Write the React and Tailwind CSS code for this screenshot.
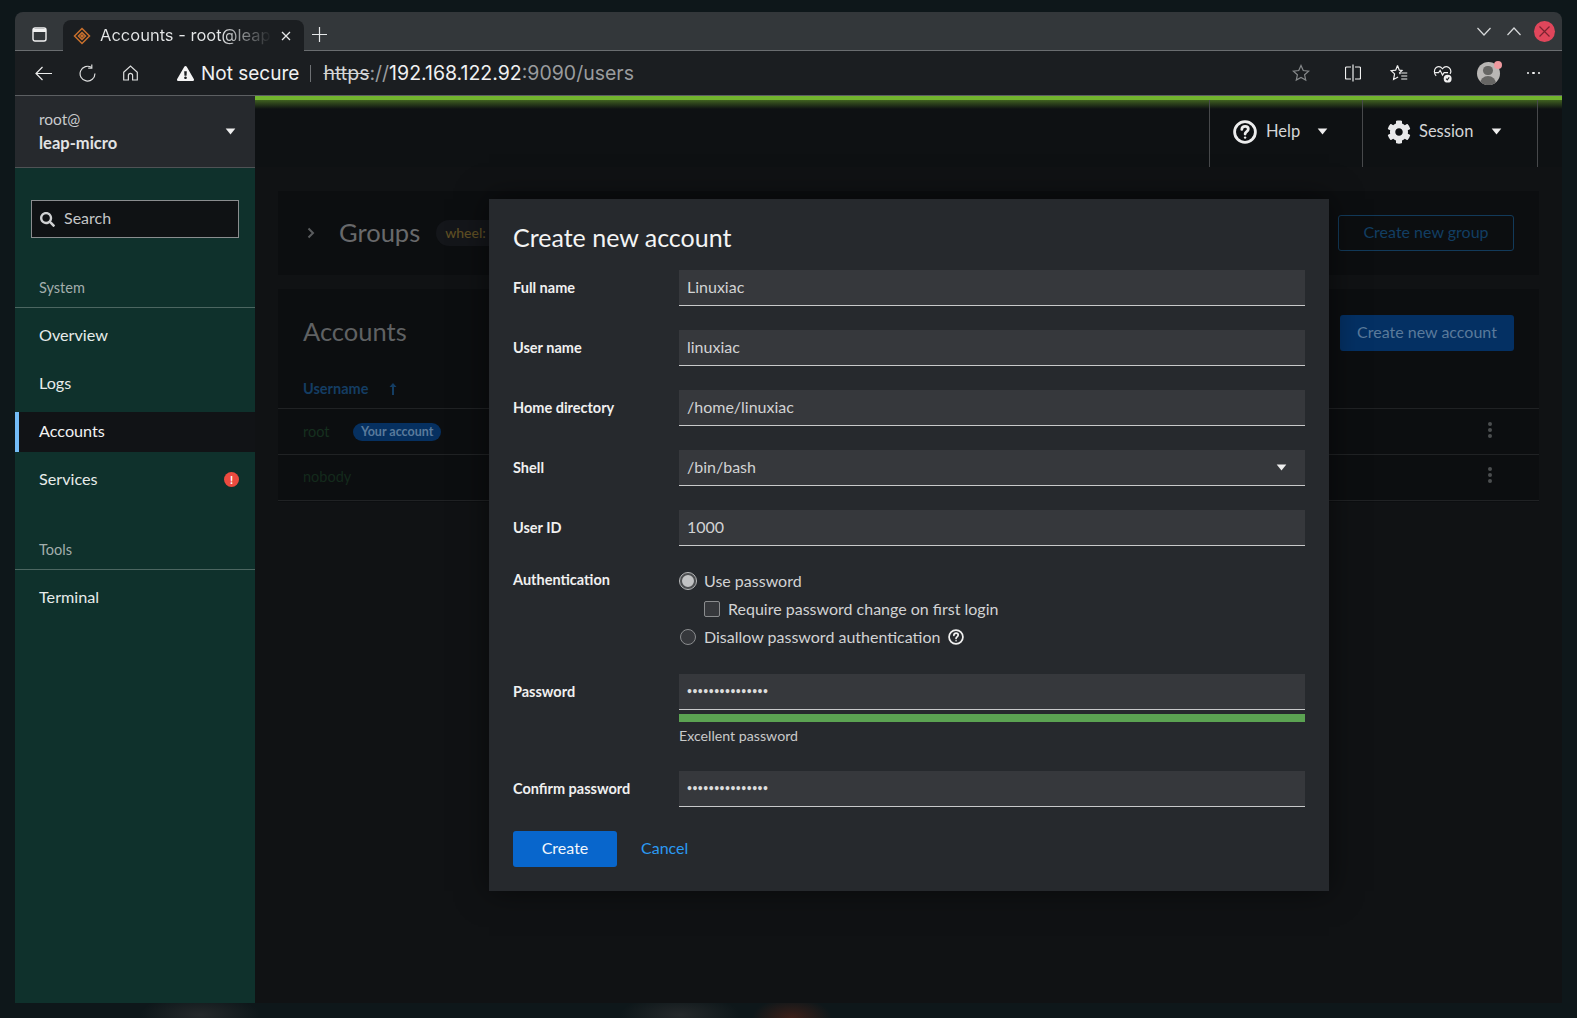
import React from "react";
import { FaCog, FaSearch, FaExclamationTriangle } from "react-icons/fa";

const Caret = ({ className = "" }) => (
  <svg viewBox="0 0 12 8" className={"w-[11px] h-[7px] " + className} fill="currentColor"><path d="M0.5 0.5h11L6 7.5z" /></svg>
);

const Q = ({ size, sw = 2.4 }) => (
  <svg width={size} height={size} viewBox="0 0 24 24" fill="none" stroke="currentColor" strokeWidth={sw}>
    <circle cx="12" cy="12" r="10.4" />
    <path d="M8.8 9.4c0-1.9 1.4-3.1 3.3-3.1s3.2 1.1 3.2 2.8c0 2.6-3.2 2.6-3.2 5" strokeLinecap="round" />
    <circle cx="12.1" cy="17.6" r="1.2" fill="currentColor" stroke="none" />
  </svg>
);

function TabStrip() {
  return (
    <div className="h-[39px] flex items-end bg-[#33373a] border-b border-[#6a6d70] text-[#e6e8e9] shrink-0 pl-[17px] font-[Inter,sans-serif]">
      <svg className="mb-[8px] mr-[16px]" width="15" height="15" viewBox="0 0 15 15" fill="none" stroke="#f2f2f2" strokeWidth="1.4">
        <rect x="1" y="1" width="13" height="13" rx="2" />
        <path d="M1 3.6h13" strokeWidth="3" />
      </svg>
      <div className="w-[241px] h-[31px] -mb-px bg-[#1b1e21] rounded-t-lg flex items-center pl-[10px] pr-[13px]">
        <svg width="18" height="18" viewBox="0 0 18 18" fill="none" stroke="#c9702d" strokeWidth="1.5" className="shrink-0">
          <path d="M9 1.5 16.5 9 9 16.5 1.5 9z" />
          <path d="M9 5.5 12.5 9 9 12.5 5.5 9z" />
          <circle cx="9" cy="9" r="1" fill="#c9702d" />
        </svg>
        <div className="ml-[9px] mb-[2px] w-[172px] h-[20px] overflow-hidden whitespace-nowrap text-[16.5px] leading-[20px] bg-[linear-gradient(90deg,#e6e8e9_70%,#1b1e21_100%)] bg-clip-text text-transparent">Accounts - root@leap</div>
        <svg className="ml-auto" width="10" height="10" viewBox="0 0 10 10" stroke="#e6e8e9" strokeWidth="1.3"><path d="M1 1l8 8M9 1l-8 8" /></svg>
      </div>
      <svg className="ml-[8px] mb-[8px]" width="15" height="15" viewBox="0 0 15 15" stroke="#e6e8e9" strokeWidth="1.2"><path d="M7.5 0v15M0 7.5h15" /></svg>
      <div className="ml-auto flex items-center h-full pr-[7px]">
        <svg width="14" height="9" viewBox="0 0 14 9" fill="none" stroke="#d6d8d9" strokeWidth="1.2"><path d="M.5 1 7 8l6.5-7" /></svg>
        <svg className="ml-[16px]" width="14" height="9" viewBox="0 0 14 9" fill="none" stroke="#d6d8d9" strokeWidth="1.2"><path d="M.5 8 7 1l6.5 7" /></svg>
        <div className="ml-[13px] w-[21px] h-[21px] rounded-full bg-[#e0465b] flex items-center justify-center">
          <svg width="11" height="11" viewBox="0 0 11 11" stroke="#7a2330" strokeWidth="1.2"><path d="M.5.5l10 10M10.5.5l-10 10" /></svg>
        </div>
      </div>
    </div>
  );
}

function Toolbar() {
  return (
    <div className="h-[45px] flex items-center bg-[#1b1e21] border-b border-[#5c5f62] shrink-0 text-[#f0f1f2] font-[Inter,sans-serif]">
      <svg className="ml-[20px]" width="17" height="15" viewBox="0 0 17 15" fill="none" stroke="#eceded" strokeWidth="1.2"><path d="M17 7.5H1M7.5 1 1 7.5 7.5 14" /></svg>
      <svg className="ml-[27px]" width="17" height="18" viewBox="0 0 17 18" fill="none" stroke="#dcdddd" strokeWidth="1.2"><path d="M12.6 3.5a7.4 7.4 0 1 0 3.3 6" /><path d="M12.8.5v3.6H9.2" /></svg>
      <svg className="ml-[27px]" width="15" height="16" viewBox="0 0 15 16" fill="none" stroke="#dcdddd" strokeWidth="1.2"><path d="M.7 7.2 7.5 1l6.8 6.2V15H9.6v-4.5a2 2 0 0 0-4.2 0V15H.7z" /></svg>
      <FaExclamationTriangle className="ml-[39px] text-[#f5f5f5]" size={17} />
      <span className="ml-[7px] mt-[1px] text-[19px] leading-none whitespace-nowrap">Not secure</span>
      <div className="ml-[11px] w-px h-[17px] bg-[#6e7174]" />
      <span className="ml-[12px] mt-[2px] text-[19.5px] leading-none whitespace-nowrap">
        <span className="line-through text-[#d4d5d6]">https</span>
        <span className="text-[#9a9c9e]">://</span>
        <span>192.168.122.92</span>
        <span className="text-[#9a9c9e]">:9090/users</span>
      </span>
      <div className="ml-auto flex items-center pr-[22px]">
        <svg width="18" height="18" viewBox="0 0 24 24" fill="none" stroke="#85888a" strokeWidth="1.6"><path d="M12 2l3 6.7 7.2.8-5.4 4.9 1.5 7.1L12 17.9l-6.3 3.6 1.5-7.1L1.8 9.5 9 8.7z" /></svg>
        <svg className="ml-[35px]" width="16" height="18" viewBox="0 0 16 18" fill="none" stroke="#f0f0f0" strokeWidth="1.2"><path d="M6 3H1.5a1 1 0 0 0-1 1v10a1 1 0 0 0 1 1H6M10 3h4.5a1 1 0 0 1 1 1v10a1 1 0 0 1-1 1H10M8 .5v17" /></svg>
        <svg className="ml-[29px]" width="18" height="18" viewBox="0 0 24 24" fill="none" stroke="#f0f0f0" strokeWidth="1.6"><path d="M10 2l2.4 6.2 3.6.3-3.2 3.4 1 1.6M10 2 7.6 8.2 1.5 9l4.6 4.2-1.3 7.4 6-3.4" /><path d="M15 12h8M15 16h8M15 20h8" /></svg>
        <svg className="ml-[25px]" width="19" height="19" viewBox="0 0 24 24" fill="none" stroke="#f0f0f0" strokeWidth="1.5">
          <path d="M4 15C1 11.5 1 7 4 4.5c3-2 6-1 8 1.5 2-2.5 5-3.5 8-1.5 2.5 2 3 5.5 1.5 8" />
          <path d="M2 11h5l2-3 3 6 2-3h5" />
          <circle cx="18.5" cy="18.5" r="5" fill="#f0f0f0" stroke="none" />
          <path d="M16.5 18.5l1.5 1.5 2.5-3" stroke="#1b1e21" />
        </svg>
        <div className="ml-[25px] relative w-[23px] h-[23px]">
          <div className="w-full h-full rounded-full bg-[#b9b7b5] overflow-hidden flex flex-col items-center">
            <div className="mt-[4px] w-[10px] h-[10px] rounded-full bg-[#666664]" />
            <div className="mt-[1px] w-[16px] h-[10px] rounded-t-full bg-[#666664]" />
          </div>
          <div className="absolute -right-[2px] -top-[1px] w-[8px] h-[8px] rounded-full bg-[#ef9a9f]" />
        </div>
        <div className="ml-[27px] flex gap-[3px]">
          <div className="w-[2.5px] h-[2.5px] rounded-full bg-[#f5f5f5]" />
          <div className="w-[2.5px] h-[2.5px] rounded-full bg-[#f5f5f5]" />
          <div className="w-[2.5px] h-[2.5px] rounded-full bg-[#f5f5f5]" />
        </div>
      </div>
    </div>
  );
}

function NavItem({ label, active, alert }) {
  return (
    <div className={"h-10 flex items-center pr-4 pb-[2px] text-[16.2px] " + (active ? "bg-[#111316] border-l-4 border-[#73bcf7] pl-5 text-[#f1f2f2]" : "pl-6 text-[#e7ecea]")}>
      <span>{label}</span>
      {alert && (
        <span className="ml-auto w-[15px] h-[15px] rounded-full bg-[#ec4a3f] text-white text-[11px] font-bold leading-[15px] text-center">!</span>
      )}
    </div>
  );
}

function Sidebar() {
  return (
    <aside className="w-[240px] shrink-0 bg-[#0f312c] flex flex-col">
      <div className="h-[72px] bg-[#26292d] border-b border-[#4f5255] flex items-center pl-6 pr-[19px] shrink-0">
        <div className="text-[15.5px] leading-[24px] -mt-[2px]">
          <div className="text-[#c9cbcd]">root@</div>
          <div className="text-[#e2e3e4] text-[16.5px] font-bold">leap-micro</div>
        </div>
        <Caret className="ml-auto text-[#eeeeee]" />
      </div>
      <div className="mx-4 mt-[32px] h-[38px] bg-[#0f1214] border border-[#8a8d8f] flex items-center pl-[8px] text-[#c4c6c7] text-[16px]">
        <FaSearch size={15} className="text-[#cfd1d2]" />
        <span className="ml-[9px] mb-[2px]">Search</span>
      </div>
      <div className="mt-10 h-[30px] border-b border-[#4c6661] pl-6 text-[14.5px] leading-[20px] text-[#a3aeac]">System</div>
      <div className="mt-[8px] flex flex-col gap-2">
        <NavItem label="Overview" />
        <NavItem label="Logs" />
        <NavItem label="Accounts" active />
        <NavItem label="Services" alert />
      </div>
      <div className="mt-10 h-[30px] border-b border-[#4c6661] pl-6 text-[14.5px] leading-[20px] text-[#a3aeac]">Tools</div>
      <div className="mt-2 flex flex-col">
        <NavItem label="Terminal" />
      </div>
    </aside>
  );
}

function Kebab() {
  return (
    <div className="flex flex-col gap-[2px] ml-auto mr-[47px] -mt-[3px]">
      <div className="w-1 h-1 rounded-full bg-[#4c4e50]" />
      <div className="w-1 h-1 rounded-full bg-[#4c4e50]" />
      <div className="w-1 h-1 rounded-full bg-[#4c4e50]" />
    </div>
  );
}

function Main() {
  return (
    <main className="flex-1 min-w-0 bg-[#101214] flex flex-col">
      <div className="h-1 bg-[#72b52e] shrink-0" />
      <header className="h-[67px] shrink-0 bg-[linear-gradient(180deg,#3f6020,#0e1113_9px)] flex justify-end pr-[24px] text-[#d4d6d7] text-[16.5px]">
        <div className="w-[153px] border-l border-[#47494b] flex items-center pl-[23px] pb-[4px]">
          <span className="text-[#eceded]"><Q size={24} sw={2.8} /></span>
          <span className="ml-[9px]">Help</span>
          <Caret className="ml-[17px] text-[#eeeeee]" />
        </div>
        <div className="w-[176px] border-x border-[#47494b] flex items-center pl-[24px] pb-[4px]">
          <FaCog size={24} className="text-[#e8e9ea]" />
          <span className="ml-[8px]">Session</span>
          <Caret className="ml-[18px] text-[#eeeeee]" />
        </div>
      </header>
      <div className="mx-[23px] mt-[24px] flex flex-col gap-[14px] relative">
        <section className="h-[84px] bg-[#0c0e10] flex items-center pl-[29px] pr-[25px]">
          <svg width="8" height="12" viewBox="0 0 8 12" fill="none" stroke="#5a5c5e" strokeWidth="2"><path d="M1.5 1.5 6 6l-4.5 4.5" /></svg>
          <span className="ml-[24px] mb-[2px] text-[25.5px] text-[#68696b]">Groups</span>
          <span className="ml-[16px] h-[26px] px-[9px] rounded-full bg-[#14161a] text-[14px] leading-[26px] font-medium text-[#5f4f24] whitespace-nowrap">wheel: 1</span>
          <div className="ml-auto w-[176px] h-9 pb-[2px] rounded-[3px] border border-[#123a5a] flex items-center justify-center text-[16px] text-[#123e63]">Create new group</div>
        </section>
        <section className="h-[213px] bg-[#0c0e10]">
          <div className="h-[119px] flex pl-[25px] pr-[25px]">
            <span className="mt-[24px] text-[25.5px] leading-[36px] text-[#5f6163]">Accounts</span>
            <div className="ml-auto mt-[26px] w-[174px] h-9 pb-[2px] rounded-[3px] bg-[#043063] flex items-center justify-center text-[16px] text-[#5a7a9b]">Create new account</div>
          </div>
          <div className="h-[46px] border-t border-[#202224] flex items-center pl-[25px] text-[14px]">
            <span className="w-[50px] text-[14.5px] text-[#16301f]">root</span>
            <span className="h-[18px] px-[8px] rounded-full bg-[#063060] text-[12.5px] leading-[18px] font-bold text-[#5a7a9b] whitespace-nowrap">Your account</span>
            <Kebab />
          </div>
          <div className="h-[47px] pb-[2px] border-y border-[#202224] flex items-center pl-[25px] text-[14.5px] text-[#142a1c]">
            <span>nobody</span>
            <Kebab />
          </div>
        </section>
        <div className="absolute left-[25px] top-[187px] flex items-center text-[14.5px] font-bold text-[#143d63]">
          <span>Username</span>
          <svg className="ml-[21px]" width="8" height="12" viewBox="0 0 8 12" fill="#143d63"><path d="M4 0 7.5 4H5v8H3V4H.5z" /></svg>
        </div>
      </div>
    </main>
  );
}

const Field = ({ children, right }) => (
  <div className="h-9 bg-[#36383c] border-b border-[#c8c9ca] flex items-center px-2 text-[16px] text-[#d2d3d4]">
    <span className="mb-[2px]">{children}</span>
    {right}
  </div>
);

const Label = ({ children }) => (
  <div className="h-9 flex items-center text-[14.5px] font-bold text-[#f0f0f0]">{children}</div>
);

const Dots = () => <span className="block text-[8.5px] font-bold tracking-[0.5px] leading-[16px] text-[#dcdddd]">•••••••••••••••</span>;

function Modal() {
  return (
    <div className="absolute left-[489px] top-[199px] w-[840px] h-[692px] bg-[#26292d] pt-[23px] px-6 pb-6 text-[#d2d3d4] shadow-[0_0_30px_rgba(0,0,0,0.5)]">
      <h1 className="text-[25px] leading-[30px] text-[#f3f4f4]">Create new account</h1>
      <div className="mt-[18px] grid grid-cols-[166px_1fr] gap-y-6">
        <Label>Full name</Label>
        <Field>Linuxiac</Field>
        <Label>User name</Label>
        <Field>linuxiac</Field>
        <Label>Home directory</Label>
        <Field>/home/linuxiac</Field>
        <Label>Shell</Label>
        <Field right={<Caret className="ml-auto mr-[10px] text-[#eeeeee]" />}>/bin/bash</Field>
        <Label>User ID</Label>
        <Field>1000</Field>
        <div className="text-[14.5px] font-bold text-[#f0f0f0] leading-[20px]">Authentication</div>
        <div className="flex flex-col gap-1 text-[16px] leading-6 -mt-px mb-px">
          <div className="flex items-center">
            <span className="w-4 h-4 ml-px rounded-full bg-[#c2c3c4] border-[2.5px] border-[#4d4f51] outline outline-[1px] outline-[#bcbdbe]" />
            <span className="ml-2">Use password</span>
          </div>
          <div className="flex items-center pl-[25px]">
            <span className="w-4 h-4 rounded-[2px] bg-[#36383c] border border-[#8a8c8e]" />
            <span className="ml-2">Require password change on first login</span>
          </div>
          <div className="flex items-center">
            <span className="w-4 h-4 ml-px rounded-full bg-[#36383c] border border-[#8a8c8e]" />
            <span className="ml-2">Disallow password authentication</span>
            <span className="ml-2 text-[#f0f0f0]"><Q size={16} sw={2.6} /></span>
          </div>
        </div>
        <Label>Password</Label>
        <div>
          <Field><Dots /></Field>
          <div className="mt-1 h-2 bg-[#5ba352]" />
          <div className="mt-[5px] mb-[2px] text-[14.2px] leading-[18px] text-[#c9caca]">Excellent password</div>
        </div>
        <Label>Confirm password</Label>
        <Field><Dots /></Field>
      </div>
      <div className="mt-6 flex items-center">
        <div className="w-[104px] h-9 pb-[2px] rounded-[3px] bg-[#0866cc] flex items-center justify-center text-[16px] text-[#f2f6fb]">Create</div>
        <div className="ml-6 mb-[2px] text-[16px] text-[#2b9af3]">Cancel</div>
      </div>
    </div>
  );
}

export default function App() {
  return (
    <div className="relative w-[1577px] h-[1018px] overflow-hidden bg-[#0e171a] bg-[radial-gradient(ellipse_40px_20px_at_792px_1018px,#3d1f18,transparent),radial-gradient(ellipse_60px_20px_at_200px_1015px,#25292b,transparent),radial-gradient(ellipse_60px_20px_at_680px_1015px,#25292b,transparent)] pt-3 pl-[15px] pr-[15px] pb-[15px] font-[Lato,sans-serif]">
      <div className="h-full flex flex-col rounded-t-lg overflow-hidden relative">
        <TabStrip />
        <Toolbar />
        <div className="flex-1 min-h-0 flex">
          <Sidebar />
          <Main />
        </div>
      </div>
      <Modal />
    </div>
  );
}
